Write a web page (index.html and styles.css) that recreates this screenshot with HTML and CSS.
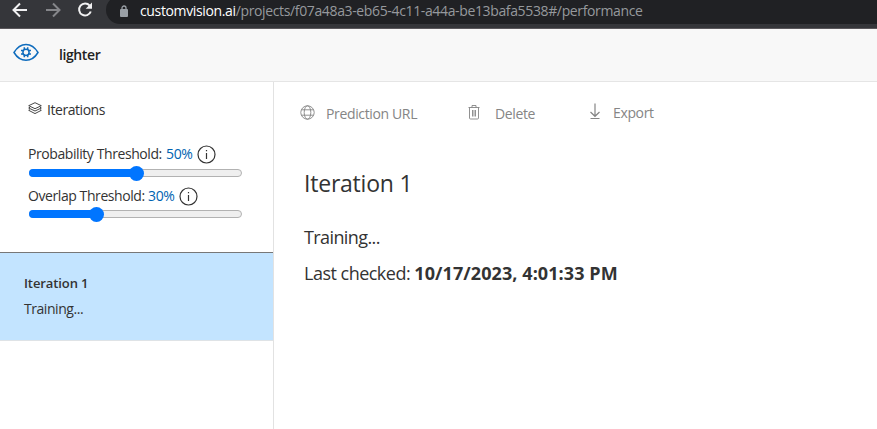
FILE: index.html
```
<!DOCTYPE html>
<html lang="en">
<head>
<meta charset="utf-8">
<title>Custom Vision</title>
<link rel="stylesheet" href="styles.css">
</head>
<body>
<div class="browser-bar">
  <svg class="nav-icon back" width="16" height="20" viewBox="0 0 16 20"><path d="M15 10H2M8 3.5 1.5 10 8 16.500"/></svg>
  <svg class="nav-icon forward" width="16" height="20" viewBox="0 0 16 20"><path d="M1 10h13M8 3.500 14.500 10 8 16.500"/></svg>
  <svg class="nav-icon reload" width="16" height="20" viewBox="0 0 16 20"><path d="M12.700 5.600A6 6 0 1 0 13.800 11.500"/><path class="solid" d="M15 2.500v6.300H8.700z"/></svg>
  <div class="address">
    <svg class="lock" width="8" height="12" viewBox="0 0 8 12"><rect x="0" y="4" width="8" height="8" rx="1"/><path d="M2 5V3a2 2 0 0 1 4 0v2"/></svg>
    <span class="url"><span class="host">customvision.ai</span><span class="path">/projects/f07a48a3-eb65-4c11-a44a-be13bafa5538#/performance</span></span>
  </div>
</div>
<header class="app-header">
  <svg class="logo" width="26" height="18" viewBox="0 0 26 18"><path d="M1 9.500C4 4.500 8 1.500 13 1.500s9 3 12 8c-3 5-7 7.700-12 7.700S4 14.500 1 9.500z"/><circle cx="13" cy="9.300" r="3.100"/><path d="M11.300 4.300v2.500M14.700 4.300v2.500M11.300 11.800v2.500M14.700 11.800v2.500M8 7.600h2.500M8 11h2.500M15.500 7.600H18M15.500 11H18"/></svg>
  <span class="project">lighter</span>
</header>
<main class="content">
  <aside class="sidebar">
    <div class="settings">
      <div class="side-title">
        <svg width="14" height="13" viewBox="0 0 14 13"><path d="M7 .7 13.300 3.700 7 6.700.7 3.700zM2 5.200.7 6 7 9l6.300-3L12 5.200M2 7.600l-1.300.7L7 11.600l6.300-3.300-1.300-.7"/></svg>
        <span>Iterations</span>
      </div>
      <div class="threshold">
        <span class="name probability">Probability Threshold:</span><span class="percent">50%</span>
        <svg class="info" width="19" height="19" viewBox="0 0 19 19"><circle cx="9.500" cy="9.500" r="8.500"/><path d="M9.500 8v6M9.500 5v1.300"/></svg>
      </div>
      <div class="slider"><div class="fill half"></div></div>
      <div class="threshold second">
        <span class="name overlap">Overlap Threshold:</span><span class="percent">30%</span>
        <svg class="info" width="19" height="19" viewBox="0 0 19 19"><circle cx="9.500" cy="9.500" r="8.500"/><path d="M9.500 8v6M9.500 5v1.300"/></svg>
      </div>
      <div class="slider"><div class="fill third"></div></div>
    </div>
    <div class="iteration">
      <div class="iteration-name">Iteration 1</div>
      <div class="iteration-state">Training...</div>
    </div>
  </aside>
  <section class="detail">
    <nav class="toolbar">
      <div class="action prediction"><svg width="15" height="15" viewBox="0 0 15 15"><circle cx="7.500" cy="7.500" r="6.700"/><ellipse cx="7.500" cy="7.500" rx="3.300" ry="6.700"/><path d="M1.500 4.800h12M1.500 10.200h12"/></svg><span>Prediction URL</span></div>
      <div class="action delete"><svg width="12" height="15" viewBox="0 0 12 15"><path d="M.5 2.500h11M4 2.500v-2h4v2M1.500 2.500V13q0 1 1 1h7q1 0 1-1V2.500M4.500 5v6.500M6 5v6.500M7.500 5v6.500"/></svg><span>Delete</span></div>
      <div class="action export"><svg width="12" height="17" viewBox="0 0 12 17"><path d="M6 .5v12.500M1.500 9l4.500 4.300 4.500-4.300M1.500 15.500h9"/></svg><span>Export</span></div>
    </nav>
    <h1>Iteration 1</h1>
    <p class="status">Training...</p>
    <p class="checked">Last checked: <strong>10/17/2023, 4:01:33 PM</strong></p>
  </section>
</main>
</body>
</html>
```
FILE: styles.css
```
* { box-sizing: border-box; }
body { margin: 0; height: 429px; overflow: hidden; background: #fff; color: #333; font: 14px/20px "Open Sans", sans-serif; white-space: nowrap; }
svg { display: block; flex: none; fill: none; stroke: currentColor; }
.browser-bar { height: 29px; display: flex; align-items: flex-start; background: #35363a; border-bottom: 1px solid #5a575b; overflow: hidden; }
.nav-icon { color: #f1f1f2; stroke-width: 2; }
.back { margin-left: 12px; }
.forward { margin-left: 17px; color: #85868a; }
.reload { margin-left: 16px; }
.solid { fill: currentColor; stroke: none; }
.address { margin: -4px 0 0 13px; height: 28px; width: 800px; flex: none; display: flex; align-items: center; padding: 1px 0 0 14px; background: #202124; border-radius: 14px; }
.lock { color: #9aa0a6; stroke-width: 1.3; }
.lock rect { fill: currentColor; stroke: none; }
.url { margin-left: 12px; font-size: 14px; }
.host { color: #fff; letter-spacing: -.36px; }
.path { color: #96999d; letter-spacing: -.36px; }
.app-header { height: 53px; display: flex; align-items: flex-start; padding: 14px 0 0 13px; background: #f8f8f8; border-bottom: 1px solid #e5e5e5; }
.logo { color: #0f6cbd; stroke-width: 1.5; }
.project { margin-left: 20px; margin-top: 2px; font-weight: 600; font-size: 14px; line-height: 20px; color: #222; letter-spacing: -.4px; }
.content { display: flex; height: 347px; }
.sidebar { width: 274px; flex: none; border-right: 1px solid #e2e2e2; }
.settings { height: 170px; padding: 18px 0 0 28px; }
.side-title { display: flex; height: 20px; gap: 5px; letter-spacing: -.45px; }
.side-title svg { margin-top: 2px; stroke-width: .9; }
.threshold { display: flex; align-items: center; height: 20px; margin-top: 24px; }
.threshold.second { margin-top: 9px; }
.name { letter-spacing: -.42px; }
.probability { width: 138px; }
.overlap { width: 120px; }
.percent { width: 27px; color: #0063b1; letter-spacing: -.35px; }
.info { margin-left: 4px; stroke-width: 1.2; }
.slider { width: 213px; height: 8px; margin: 5px 0 0 1px; border: 1px solid #b2b2b2; border-radius: 4px; background: #efefef; }
.second + .slider { margin-top: 4px; }
.fill { height: 8px; margin: -1px 0 0 -1px; border-radius: 4px; background: #0075ff; display: flex; justify-content: flex-end; align-items: center; }
.fill::after { content: ""; width: 15px; height: 15px; flex: none; margin-right: -8px; border-radius: 50%; background: #0075ff; }
.half { width: 107px; }
.third { width: 67px; }
.iteration { height: 89px; border-top: 1px solid #777; border-bottom: 1px solid #dfe3e6; background: #c3e4ff; padding: 20px 0 0 24px; }
.iteration-name { font-size: 13px; font-weight: 600; letter-spacing: -.1px; }
.iteration-state { margin-top: 6px; letter-spacing: -.45px; }
.detail { padding: 22px 0 0 30px; }
.toolbar { display: flex; width: 360px; height: 20px; color: #858585; }
.action { display: flex; align-items: flex-start; letter-spacing: -.36px; }
.action svg { stroke-width: .9; }
.prediction { width: 168px; flex: none; margin-left: -4px; gap: 11px; }
.prediction svg { margin-top: 1px; }
.delete { width: 121px; flex: none; gap: 15px; }
.delete svg { margin-top: 1px; }
.export { gap: 12px; }
.export span { margin-top: -1px; }
.export svg { stroke-width: 1.2; margin-top: -1px; }
h1 { margin: 43px 0 0; font-size: 23px; line-height: 32px; font-weight: 400; letter-spacing: -.22px; }
p { margin: 0; font-size: 18px; line-height: 24px; }
.status { margin-top: 26px; letter-spacing: -.6px; }
.checked { margin-top: 12px; letter-spacing: -.51px; }
strong { font-weight: 700; letter-spacing: .08px; }
```
